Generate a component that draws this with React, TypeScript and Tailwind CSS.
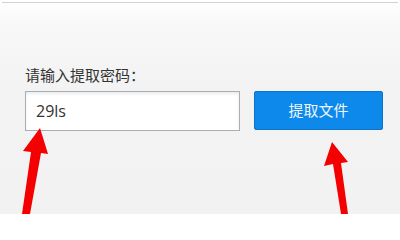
import React from "react";

export default function App() {
  return (
    <div
      className="relative w-[400px] h-[214px] overflow-hidden bg-[linear-gradient(to_bottom,#ffffff_0px,#f9f9f9_20px,#f3f3f3_80px,#f2f2f2_214px)]"
      style={{ fontFamily: '"Noto Sans CJK SC", "Noto Sans", sans-serif' }}
    >
      <div className="h-[2px] bg-white" />
      <div className="mx-[2px] h-[1px] bg-[#d2d2d2]" />
      <div className="pl-[25px] pt-[62px]">
        <div className="h-[20px] text-[15px] leading-[20px] text-[#333333]">请输入提取密码：</div>
        <div className="mt-[6px] flex gap-[14px]">
          <div className="flex h-[40px] w-[215px] items-center border border-[#a8aeb4] bg-white pl-[10px] shadow-[inset_0_2px_3px_rgba(0,0,0,0.08)]">
            <span
              className="text-[16px] text-[#333333]"
              style={{ fontFamily: '"Open Sans", "Noto Sans", sans-serif' }}
            >
              29ls
            </span>
          </div>
          <div className="flex h-[39px] w-[129px] items-center justify-center rounded-[2px] border border-[#0e72c8] bg-[#0d88eb] text-[15px] text-[#eef6fe]">
            提取文件
          </div>
        </div>
      </div>
      <svg className="absolute left-0 top-0" width="400" height="214" viewBox="0 0 400 214">
        <polygon
          points="40,128 48,154 41,153 30,214 22,214 31,152 23,151"
          fill="#f40000"
        />
        <polygon
          points="332,142 348,162 341,163 348,214 341,214 333,164 324,166"
          fill="#f40000"
        />
      </svg>
    </div>
  );
}
